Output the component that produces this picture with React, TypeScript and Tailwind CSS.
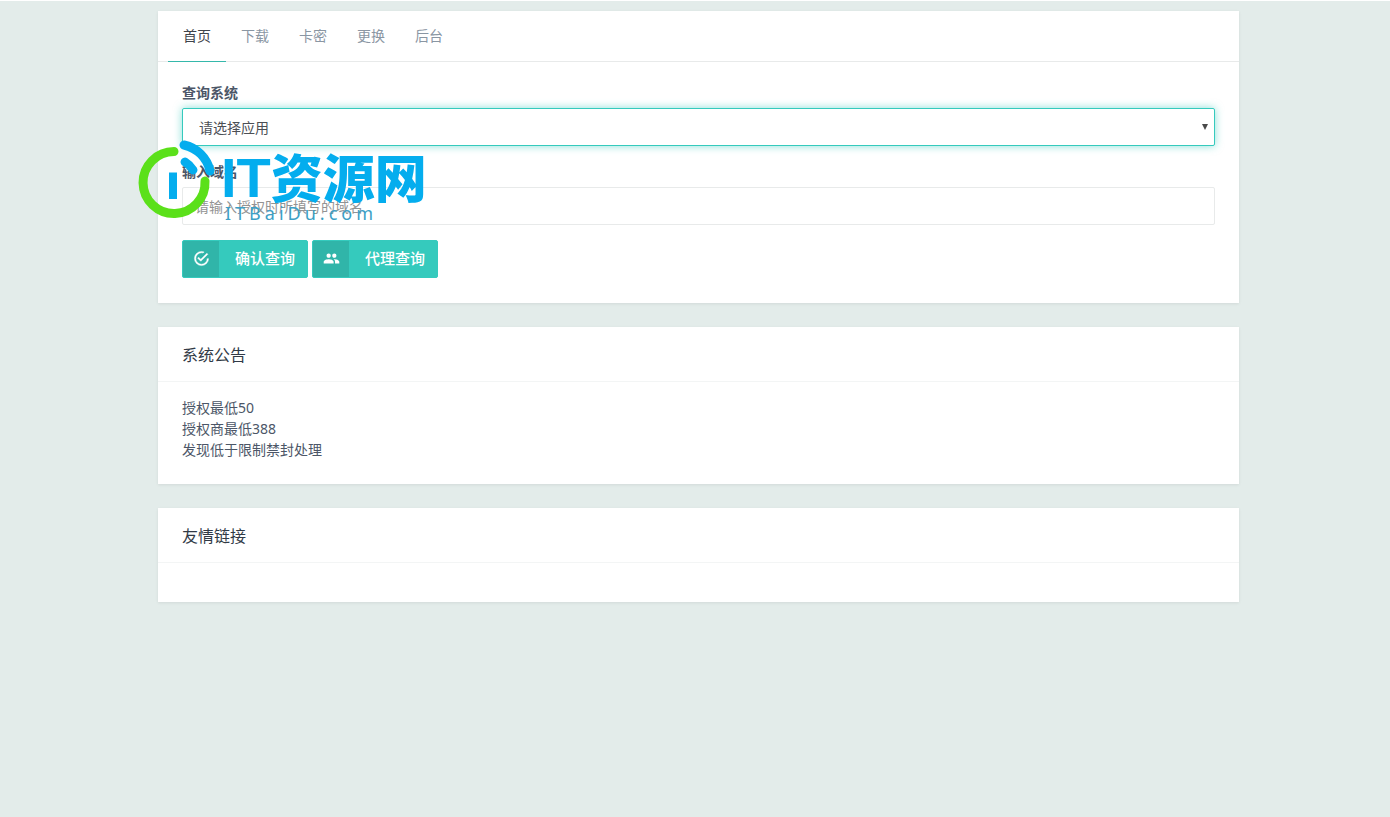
import { ReactNode } from "react";
import { MdPeople } from "react-icons/md";

const tabs = ["首页", "下载", "卡密", "更换", "后台"];

const notices = ["授权最低50", "授权商最低388", "发现低于限制禁封处理"];

function Card({ title, children }: { title: string; children?: ReactNode }) {
  return (
    <section className="bg-white shadow-[0_1px_3px_rgba(0,0,0,0.08)]">
      <h2 className="border-b border-[#f3f5f5] px-6 pt-4 pb-[14px] text-base leading-6 text-[#313a46]">
        {title}
      </h2>
      <div className="px-6 pt-[15px] pb-6">{children}</div>
    </section>
  );
}

function IconButton({ icon, children }: { icon: ReactNode; children: ReactNode }) {
  return (
    <button
      type="button"
      className="flex h-[38px] items-stretch overflow-hidden rounded-xs border border-[#35cabd] bg-[#35cabd] text-[15px] font-medium text-white"
    >
      <span className="flex w-9 items-center justify-center bg-[#30b5a9] pb-px">
        {icon}
      </span>
      <span className="flex items-center pr-3 pb-px pl-4">{children}</span>
    </button>
  );
}

function CheckIcon() {
  return (
    <svg viewBox="0 0 24 24" className="size-[17px]" fill="currentColor">
      <path
        d="M20,12A8,8 0 0,1 12,20A8,8 0 0,1 4,12A8,8 0 0,1 12,4C12.76,4 13.5,4.11 14.2,4.31L15.77,2.74C14.61,2.26 13.34,2 12,2A10,10 0 0,0 2,12A10,10 0 0,0 12,22A10,10 0 0,0 22,12M7.91,10.08L6.5,11.5L11,16L21,6L19.59,4.58L11,13.17L7.91,10.08Z"
        stroke="currentColor"
        strokeWidth="0.6"
      />
    </svg>
  );
}

function Watermark() {
  return (
    <div className="pointer-events-none absolute top-[124px] -left-7 flex whitespace-nowrap text-[#04adee]">
      <svg viewBox="0 0 90 90" className="h-[90px] w-[90px] shrink-0" fill="none">
        <path
          d="M44 16.5A31 31 0 1 0 75 46"
          stroke="#5be01a"
          strokeWidth="9"
          strokeLinecap="round"
        />
        <path
          d="M54 10A34 34 0 0 1 80 36"
          stroke="#04adee"
          strokeWidth="9"
          strokeLinecap="round"
        />
        <path
          d="M55 27Q60 30 63 35"
          stroke="#04adee"
          strokeWidth="9"
          strokeLinecap="round"
        />
        <path d="M39 37.5H47V64H39Z" fill="#04adee" />
      </svg>
      <div className="pt-3 pl-px">
        <p className="flex h-[58px] items-center">
          <span className="pt-1 font-['Liberation_Sans'] text-[56px] leading-none font-bold">
            IT
          </span>
          <span className="font-['Noto_Sans_CJK_SC'] text-[52px] leading-none font-black">
            资源网
          </span>
        </p>
        <p className="pl-1 font-['Noto_Sans'] text-lg leading-4 tracking-[4px] text-[#3c9fc6]">
          ITBaiDu.com
        </p>
      </div>
    </div>
  );
}

export default function App() {
  return (
    <div className="min-h-screen border-t border-white bg-[#e3ecea] pt-[10px] pr-4 pb-6 pl-[23px] font-['Noto_Sans','Noto_Sans_CJK_SC',sans-serif] text-sm leading-[21px] text-[#4c5667]">
      <main className="mx-auto flex max-w-[1081px] flex-col gap-6">
        <section className="relative bg-white shadow-[0_1px_3px_rgba(0,0,0,0.08)]">
          <nav className="flex border-b border-[#e8eaea] px-[10px]">
            {tabs.map((tab, i) => (
              <a
                key={tab}
                href="#"
                className={
                  i === 0
                    ? "-mb-px border-b border-[#35b8ab] px-[15px] pt-[14px] pb-[15px] text-[#3f444c]"
                    : "px-[15px] pt-[14px] pb-[15px] text-[#8a96a3]"
                }
              >
                {tab}
              </a>
            ))}
          </nav>
          <form className="px-6 pt-5 pb-[25px]">
            <label htmlFor="app" className="mb-[5px] block font-bold">
              查询系统
            </label>
            <div className="relative mb-[15px]">
              <select
                id="app"
                className="block h-[38px] w-full appearance-none rounded-xs border border-[#35cabd] bg-white px-4 text-[#4c4f55] shadow-[0_0_8px_rgba(53,202,189,0.6)] outline-none"
              >
                <option>请选择应用</option>
              </select>
              <svg
                viewBox="0 0 6 6"
                className="pointer-events-none absolute top-4 right-[7px] size-[6px]"
                fill="#4a4a4a"
              >
                <path d="M0 0H6L3 6Z" />
              </svg>
            </div>
            <label htmlFor="domain" className="mb-[5px] block font-bold">
              输入域名
            </label>
            <input
              id="domain"
              type="text"
              placeholder="请输入授权时所填写的域名"
              className="mb-[15px] block h-[38px] w-full rounded-xs border border-[#e8eaea] px-3 outline-none placeholder:text-[#939393]"
            />
            <div className="flex gap-1">
              <IconButton icon={<CheckIcon />}>确认查询</IconButton>
              <IconButton icon={<MdPeople className="size-[17px]" />}>
                代理查询
              </IconButton>
            </div>
          </form>
          <Watermark />
        </section>
        <Card title="系统公告">
          {notices.map((notice) => (
            <p key={notice}>{notice}</p>
          ))}
        </Card>
        <Card title="友情链接" />
      </main>
    </div>
  );
}
